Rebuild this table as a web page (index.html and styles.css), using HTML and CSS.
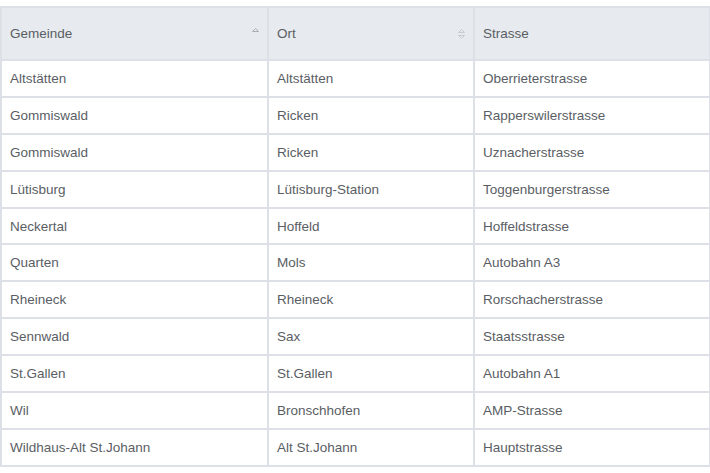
FILE: index.html
```html
<!DOCTYPE html>
<html lang="de">
<head>
<meta charset="utf-8">
<title>Tabelle</title>
<link rel="stylesheet" href="styles.css">
</head>
<body>
<div class="wrap">
<table class="grid">
  <colgroup>
    <col class="c1"><col class="c2"><col class="c3">
  </colgroup>
  <thead>
    <tr>
      <th><div class="th-in"><span>Gemeinde</span>
        <svg class="sort" width="9" height="14" viewBox="0 0 9 14"><path d="M1.5 4.5 L4.5 1.5 L7.5 4.5 Z" fill="none" stroke="#a9afb8" stroke-width="1"/></svg></div></th>
      <th><div class="th-in"><span>Ort</span>
        <svg class="sort" width="9" height="14" viewBox="0 0 9 14"><path d="M1.5 5.5 L4.5 2.5 L7.5 5.5 Z" fill="none" stroke="#c6cbd2" stroke-width="1"/><path d="M1.5 8.5 L4.5 11.5 L7.5 8.5 Z" fill="none" stroke="#c6cbd2" stroke-width="1"/></svg></div></th>
      <th><div class="th-in"><span>Strasse</span></div></th>
    </tr>
  </thead>
  <tbody>
    <tr><td>Altstätten</td><td>Altstätten</td><td>Oberrieterstrasse</td></tr>
    <tr><td>Gommiswald</td><td>Ricken</td><td>Rapperswilerstrasse</td></tr>
    <tr><td>Gommiswald</td><td>Ricken</td><td>Uznacherstrasse</td></tr>
    <tr><td>Lütisburg</td><td>Lütisburg-Station</td><td>Toggenburgerstrasse</td></tr>
    <tr><td>Neckertal</td><td>Hoffeld</td><td>Hoffeldstrasse</td></tr>
    <tr><td>Quarten</td><td>Mols</td><td>Autobahn A3</td></tr>
    <tr><td>Rheineck</td><td>Rheineck</td><td>Rorschacherstrasse</td></tr>
    <tr><td>Sennwald</td><td>Sax</td><td>Staatsstrasse</td></tr>
    <tr><td>St.Gallen</td><td>St.Gallen</td><td>Autobahn A1</td></tr>
    <tr><td>Wil</td><td>Bronschhofen</td><td>AMP-Strasse</td></tr>
    <tr><td>Wildhaus-Alt St.Johann</td><td>Alt St.Johann</td><td>Hauptstrasse</td></tr>
  </tbody>
</table>
</div>
</body>
</html>
```
FILE: styles.css
```css
html, body {
  margin: 0;
  padding: 0;
  background: #ffffff;
}
.wrap {
  padding: 6px 0 0 0;
}
.grid {
  width: 709px;
  border-collapse: collapse;
  table-layout: fixed;
  font-family: "Liberation Sans", Arial, sans-serif;
  font-size: 13.5px;
  color: #5a5e64;
}
.c1 { width: 267px; }
.c2 { width: 206px; }
.c3 { width: 236px; }
.grid th, .grid td {
  border: 2px solid #dde1e7;
  text-align: left;
  font-weight: normal;
  padding: 0 7px 0 8px;
  white-space: nowrap;
}
.grid th {
  background: #e7eaee;
  height: 51px;
}
.grid td {
  height: 34.9px;
}
.th-in {
  display: flex;
  align-items: center;
  justify-content: space-between;
}
.sort {
  display: block;
}
```
